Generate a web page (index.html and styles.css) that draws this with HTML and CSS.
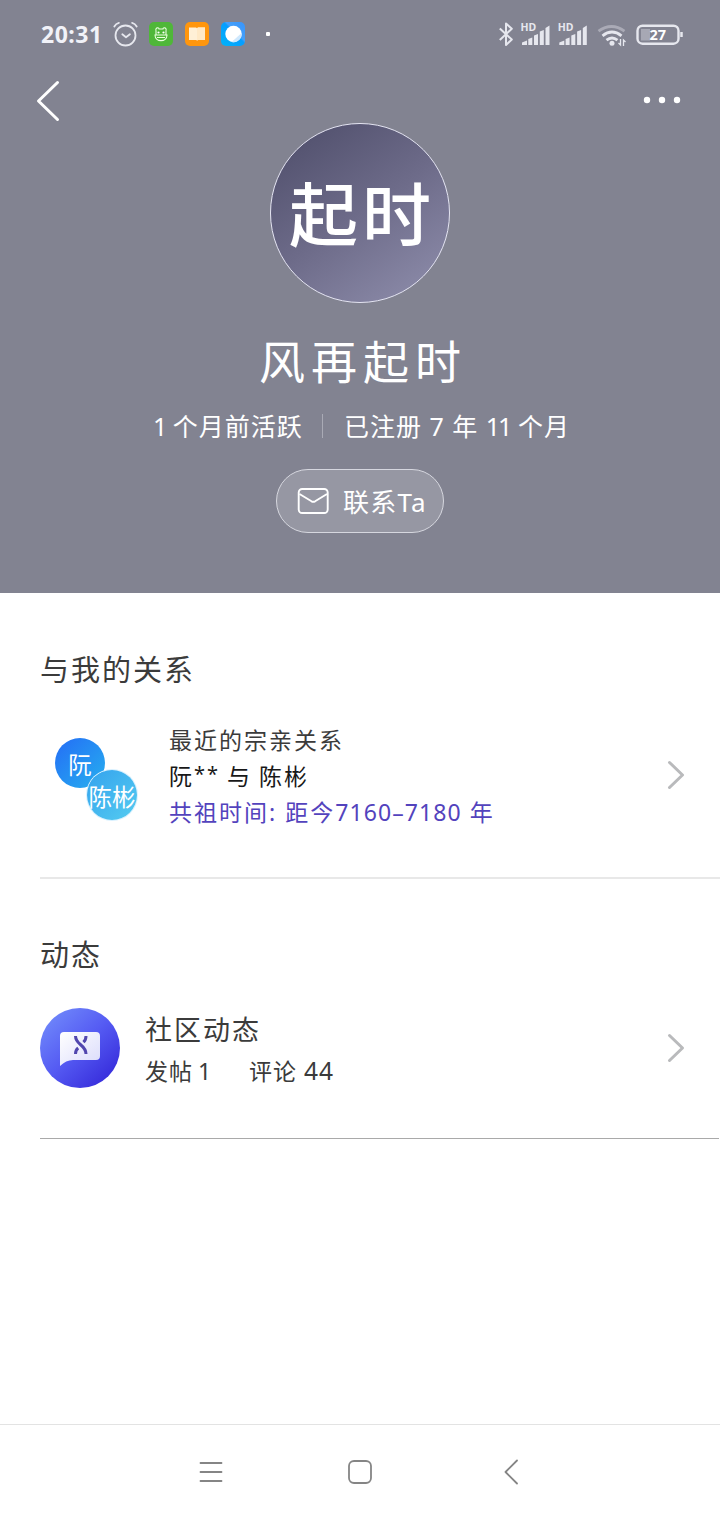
FILE: index.html
```html
<!DOCTYPE html>
<html lang="zh-CN">
<head>
<meta charset="utf-8">
<title>风再起时</title>
<link rel="stylesheet" href="styles.css">
</head>
<body>
<div class="screen">
  <header class="hero">
    <div class="status">
      <span class="clock">20:31</span>
      <svg class="alarm" width="26" height="26" viewBox="0 0 26 26" fill="none" stroke="#e6e7ee" stroke-width="1.8" stroke-linecap="round" stroke-linejoin="round"><circle cx="12.500" cy="14.500" r="10"/><path d="M9.300 13.300l3.700 3 3.900-3M1.300 5.500Q3 2.500 5.900 1.800M23.700 5.500Q22 2.500 19.100 1.800"/></svg>
      <svg class="app" width="24" height="24" viewBox="0 0 24 24"><rect width="24" height="24" rx="5" fill="#4fb739"/><g fill="none" stroke="#eaffde" stroke-width="1.1"><path d="M6 13h12c0 7.500-12 7.500-12 0zM7 13V8.500M17 13V8.500M7 8.500c-1-3 3-3.500 3-1.500h4c0-2 4-1.500 3 1.500M8 15.500h8"/></g><circle cx="9.500" cy="10.500" r="1.100" fill="#fff"/><circle cx="14.500" cy="10.500" r="1.100" fill="#fff"/></svg>
      <svg class="app" width="24" height="24" viewBox="0 0 24 24"><rect width="24" height="24" rx="5" fill="#ff960d"/><path d="M4 5.500h7l1 .8 1-.8h7v12.500h-7l-1 .6-1-.6H4z" fill="#fff0d6"/><path d="M12 6.300l1-.8h7v12.500h-7l-1 .6z" fill="#ffe9c6"/></svg>
      <svg class="app" width="24" height="24" viewBox="0 0 24 24"><defs><linearGradient id="sky" x1="0" y1="1" x2="1" y2="0"><stop offset="0" stop-color="#00b4f8"/><stop offset=".55" stop-color="#069dff"/><stop offset=".6" stop-color="#45a0fa"/><stop offset="1" stop-color="#3894fb"/></linearGradient></defs><rect width="24" height="24" rx="5" fill="url(#sky)"/><circle cx="12.500" cy="12" r="8.200" fill="#fff"/><path d="M20.600 11a8.200 8.200 0 0 1-10 9z" fill="#cfe8fd"/></svg>
      <i class="more-dot"></i>
      <svg class="signals" width="186" height="28" viewBox="0 0 186 28">
        <path d="M.8 8.500L12.800 19.500 7 25V3.500L12.800 8.800.8 20" fill="none" stroke="#e6e7ee" stroke-width="2" stroke-linejoin="round"/>
        <g id="cell" fill="#e6e7ee"><path d="M23 25v-2.500l5-2V25zM29.300 25v-6l4-1.500V25zM35 25v-9.500l4-1.500v11zM40.800 25V11.500l4-1.500v15zM46.500 25V8l4-2.500V25z"/><text class="hd" x="21.500" y="11">HD</text></g>
        <use href="#cell" x="37.300"/>
        <g fill="none" stroke="#e6e7ee" stroke-width="2.800"><path d="M99.500 11.200q13-9.500 26 0" opacity=".4"/><path d="M103.500 15.800q9.500-7.500 19 0M107.500 20.200q5.500-4.500 11 0"/></g>
        <circle cx="113" cy="23.200" r="2.500" fill="#e6e7ee"/>
        <path d="M121.500 19v6l-2-2M124.500 26v-6l2 2" fill="none" stroke="#e6e7ee" stroke-width="1.300"/>
        <rect x="138.500" y="5.700" width="41" height="18" rx="5" fill="none" stroke="#e6e7ee" stroke-width="2.400"/><path d="M142 9h9v11.500h-9z" fill="#a7a8b4"/><path d="M182.500 12v5" stroke="#e6e7ee" stroke-width="2.500"/>
        <text class="battery" x="158.700" y="20" text-anchor="middle">27</text>
      </svg>
    </div>
    <nav class="topbar">
      <svg width="24" height="42" viewBox="0 0 24 42" fill="none" stroke="#fff" stroke-width="3" stroke-linecap="round" stroke-linejoin="round"><path d="M21.500 2.500L2.500 21l19 18.500"/></svg>
      <svg width="38" height="8" viewBox="0 0 38 8" fill="#fff"><circle cx="4" cy="4" r="3.200"/><circle cx="19" cy="4" r="3.200"/><circle cx="34" cy="4" r="3.200"/></svg>
    </nav>
    <div class="avatar">起时</div>
    <h1 class="name">风再起时</h1>
    <div class="stats"><span class="active">1 个月前活跃</span><i class="bar"></i><span class="joined">已注册 7 年 <span class="months">11</span> 个月</span></div>
    <button class="contact">
      <svg width="32" height="26" viewBox="0 0 32 26" fill="none" stroke="#fff" stroke-width="1.900" stroke-linejoin="round"><rect x="1.700" y="1" width="29" height="24" rx="3.500"/><path d="M2.500 6l12 7.300q1.800 1 3.600 0L30 6"/></svg>
      <span>联系Ta</span>
    </button>
  </header>
  <main class="content">
    <section class="relation">
      <h2>与我的关系</h2>
      <div class="row">
        <div class="pair"><span class="bubble first">阮</span><span class="bubble second">陈彬</span></div>
        <div class="lines">
          <p class="kind">最近的宗亲关系</p>
          <p class="people">阮<span class="stars">**</span> 与 陈彬</p>
          <p class="ancestor">共祖时间: 距今<span class="years">7160<span class="dash">–</span>7180</span> 年</p>
        </div>
        <svg class="chev" width="18" height="30" viewBox="0 0 18 30"><path d="M2.500 2.500L15.500 15l-13 12.500"/></svg>
      </div>
    </section>
    <section class="activity">
      <h2>动态</h2>
      <div class="row">
        <svg class="badge" width="80" height="80" viewBox="0 0 80 80">
          <defs><linearGradient id="blue" x1=".1" y1=".1" x2=".85" y2=".9"><stop offset="0" stop-color="#6f87fa"/><stop offset=".5" stop-color="#555bf3"/><stop offset="1" stop-color="#382edc"/></linearGradient><linearGradient id="paper" x1="0" y1="0" x2="1" y2="1"><stop offset="0" stop-color="#fff"/><stop offset="1" stop-color="#dadbfb"/></linearGradient></defs>
          <circle cx="40" cy="40" r="40" fill="url(#blue)"/>
          <path d="M24 24h32q4 0 4 4v20q0 4-4 4H33q-7 0-13 6V28q0-4 4-4z" fill="url(#paper)"/>
          <g fill="none" stroke="#5146ae" stroke-width="3"><path d="M35.500 28c0 9 10.500 8.500 10.500 18"/><path d="M46 28q0 4-2.600 6.200M38.200 40Q35.500 42 35.500 46"/></g>
        </svg>
        <div class="lines">
          <p class="community">社区动态</p>
          <p class="counts"><span class="posts">发帖 1</span><span class="comments">评论 <span class="total">44</span></span></p>
        </div>
        <svg class="chev" width="18" height="30" viewBox="0 0 18 30"><path d="M2.500 2.500L15.500 15l-13 12.500"/></svg>
      </div>
    </section>
  </main>
  <footer class="system-nav">
    <svg width="24" height="26" viewBox="0 0 24 26"><path d="M1.500 4h21M1.500 13h21M1.500 22h21"/></svg>
    <svg width="26" height="26" viewBox="0 0 26 26"><rect x="2" y="2" width="22" height="22" rx="5"/></svg>
    <svg width="16" height="26" viewBox="0 0 16 26"><path d="M14 1.500L2.500 13 14 24.500"/></svg>
  </footer>
</div>
</body>
</html>
```

FILE: styles.css
```css
* { box-sizing: border-box; }
body { margin: 0; background: #fff; font-family: "Noto Sans", "Noto Sans CJK SC", sans-serif; }
h1, h2, p { margin: 0; font-weight: 400; white-space: pre; }
svg { display: block; flex: none; }
.screen { width: 720px; height: 1520px; display: flex; flex-direction: column; color: #3b3b3b; }
.hero { height: 593px; background: #828391; color: #fff; display: flex; flex-direction: column; align-items: center; }
.status { width: 100%; height: 70px; padding: 0 35px 2px 41px; display: flex; align-items: center; }
.clock { width: 72px; font: 700 23px/30px "Noto Sans", sans-serif; letter-spacing: .5px; color: #f1f2f8; white-space: nowrap; }
.app { margin-left: 12px; }
.alarm + .app { margin-left: 10px; }
.more-dot { width: 4px; height: 4px; margin-left: 21px; background: #fff; border-radius: 1px; }
.signals { margin-left: auto; }
.hd { font: 700 10.500px "Noto Sans", sans-serif; }
.battery { font: 700 14.500px "Noto Sans", sans-serif; fill: #fff; }
.topbar { width: 100%; height: 53px; padding: 10px 39px 0 36px; display: flex; justify-content: space-between; align-items: flex-start; }
.topbar svg:last-child { margin-top: 16px; }
.avatar { flex: none; width: 180px; height: 180px; border: 1px solid #e4e4f2; border-radius: 50%; background: linear-gradient(145deg, #53526f 10%, #6d6b89 50%, #8d8caa 95%); text-align: center; font-size: 69px; font-weight: 500; line-height: 181px; letter-spacing: 4px; padding-left: 4px; }
.name { flex: none; margin-top: 24px; height: 70px; line-height: 68px; font-size: 46px; letter-spacing: 6px; padding-left: 6px; }
.stats { flex: none; width: 414px; height: 36px; margin-top: 11px; display: flex; align-items: center; font-size: 25px; line-height: 36px; letter-spacing: 1px; white-space: pre; }
.active { flex: none; width: 169px; word-spacing: -3px; }
.bar { flex: none; width: 1px; height: 24px; margin-right: 21px; background: #a9aab5; }
.joined { flex: none; }
.months { letter-spacing: -2px; }
.contact { flex: none; width: 168px; height: 64px; margin-top: 25px; padding: 0 0 0 20px; border: 1px solid #d6d7df; border-radius: 32px; background: #9697a3; color: #fff; display: flex; align-items: center; gap: 14px; font: 400 26px/64px "Noto Sans", "Noto Sans CJK SC", sans-serif; letter-spacing: 1.200px; white-space: nowrap; }
.contact span { padding-top: 2px; }
.content { height: 831px; }
.relation { height: 286px; margin-left: 40px; padding-top: 55px; border-bottom: 2px solid #e8e8e8; }
h2 { height: 42px; line-height: 44px; font-size: 29px; letter-spacing: 2px; }
.row { display: flex; padding-right: 35px; }
.relation .row { padding-top: 32px; }
.pair { width: 98px; height: 84px; margin-left: 15px; padding-top: 16px; display: flex; align-items: flex-start; flex: none; }
.bubble { width: 50px; height: 50px; flex: none; border-radius: 50%; color: #fff; text-align: center; white-space: nowrap; font-size: 23.500px; line-height: 54px; }
.first { background: linear-gradient(135deg, #246df6, #26b0ef); }
.second { margin: 32px 0 0 -18px; background: linear-gradient(135deg, #34a2ee, #54ccf0); box-shadow: 0 0 0 1px #d9f1ff; }
.relation .lines { flex: 1; font-size: 23px; line-height: 36px; letter-spacing: 2px; padding-left: 16px; }
.relation .lines p { height: 36px; }
.people { color: #181818; word-spacing: -1px; }
.stars { font-size: 20px; line-height: 0; vertical-align: 4px; }
.ancestor { color: #5343bd; }
.years { letter-spacing: 1.100px; }
.chev { fill: none; stroke: #b9babc; stroke-width: 3; stroke-linecap: round; stroke-linejoin: round; }
.relation .chev { margin-top: 38px; }
.activity { height: 260px; margin: 0 1px 0 40px; padding-top: 54px; border-bottom: 1px solid #a9a9a9; }
.activity .row { padding: 33px 34px 0 0; }
.activity .lines { flex: 1; padding-left: 25px; }
.community { height: 42px; line-height: 43px; font-size: 27px; letter-spacing: 2px; }
.counts { display: flex; height: 40px; line-height: 42px; font-size: 23px; letter-spacing: 1px; }
.posts { width: 104px; word-spacing: -2px; }
.total { font-size: 24.500px; }
.activity .chev { margin-top: 25px; }
.system-nav { height: 96px; border-top: 1px solid #e3e3e3; padding: 0 201px 2px 199px; display: grid; grid-template-columns: 148px 1fr auto; align-items: center; }
.system-nav svg { fill: none; stroke: #858585; stroke-width: 1.800; stroke-linecap: round; stroke-linejoin: round; }
```
